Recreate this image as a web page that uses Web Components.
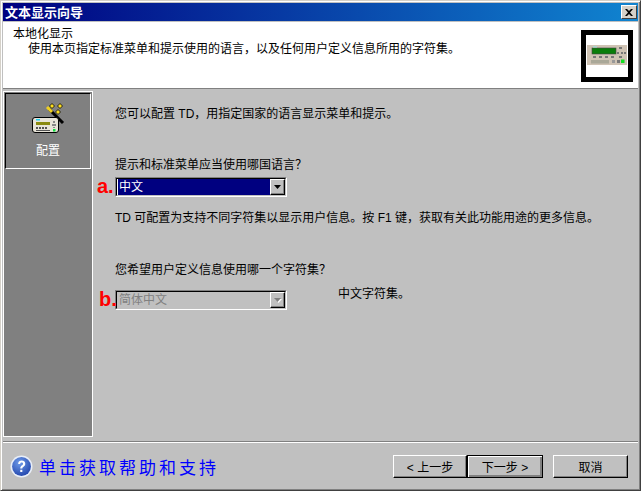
<!DOCTYPE html>
<html>
<head>
<meta charset="utf-8">
<style>
html, body { margin: 0; padding: 0; background: #c0c0c0; }
body { font: 12px "Liberation Sans", "Noto Sans CJK SC", sans-serif; color: #000; }
</style>
</head>
<body>
<wizard-window>
    <wizard-header slot="header" heading="本地化显示" text="使用本页指定标准菜单和提示使用的语言，以及任何用户定义信息所用的字符集。"></wizard-header>
    <wizard-sidebar slot="sidebar" label="配置"></wizard-sidebar>
    <wizard-text slot="content" top="16">您可以配置 TD，用指定国家的语言显示菜单和提示。</wizard-text>
    <wizard-text slot="content" top="37">提示和标准菜单应当使用哪国语言？</wizard-text>
    <wizard-combo slot="content" top="5" marker="a." marker-left="-18" value="中文" selected></wizard-combo>
    <wizard-text slot="content" top="14">TD 可配置为支持不同字符集以显示用户信息。按 F1 键，获取有关此功能用途的更多信息。</wizard-text>
    <wizard-text slot="content" top="38">您希望用户定义信息使用哪一个字符集？</wizard-text>
    <wizard-combo slot="content" top="13" marker="b." marker-left="-16" value="简体中文" disabled note="中文字符集。"></wizard-combo>
    <wizard-footer slot="footer"></wizard-footer>
</wizard-window>

<script>
const FONT = '"Liberation Sans", "Noto Sans CJK SC", sans-serif';

class WizardWindow extends HTMLElement {
    constructor() {
        super();
        this.attachShadow({ mode: 'open' });
    }
    connectedCallback() {
        this.shadowRoot.innerHTML = `
            <style>
                :host {
                    display: flex;
                    flex-direction: column;
                    box-sizing: border-box;
                    width: 641px;
                    height: 491px;
                    background: #c0c0c0;
                    border: 1px solid;
                    border-color: #d4d0c8 #404040 #404040 #d4d0c8;
                    box-shadow: inset 1px 1px 0 #fff, inset -1px -1px 0 #808080;
                    padding: 2px 2px 1px 2px;
                    font: 12px ${FONT};
                }
                .title {
                    flex: none;
                    display: flex;
                    align-items: center;
                    justify-content: space-between;
                    height: 18px;
                    padding: 0 1px 0 2px;
                    margin-bottom: 1px;
                    background: linear-gradient(90deg, #000080, #1084d0);
                    color: #fff;
                    font-size: 13px;
                    font-weight: bold;
                }
                .title span:first-child { margin-top: -1px; }
                .close {
                    display: flex;
                    align-items: center;
                    justify-content: center;
                    box-sizing: border-box;
                    width: 16px;
                    height: 14px;
                    background: #d4d0c8;
                    border: 1px solid;
                    border-color: #fff #404040 #404040 #fff;
                }
                .body {
                    flex: none;
                    display: flex;
                    height: 347px;
                    padding-top: 2px;
                }
                .content {
                    flex: 1;
                    padding-left: 22px;
                }
            </style>
            <div class="title">
                <span>文本显示向导</span>
                <span class="close">
                    <svg width="8" height="7" viewBox="0 0 8 7"><path d="M0 0h2l2 2 2-2h2L5 3.500 8 7H6L4 5 2 7H0l3-3.500z" fill="#000"/></svg>
                </span>
            </div>
            <slot name="header"></slot>
            <div class="body">
                <slot name="sidebar"></slot>
                <div class="content"><slot name="content"></slot></div>
            </div>
            <slot name="footer"></slot>
        `;
    }
}

class WizardHeader extends HTMLElement {
    constructor() {
        super();
        this.attachShadow({ mode: 'open' });
    }
    connectedCallback() {
        this.shadowRoot.innerHTML = `
            <style>
                :host {
                    display: flex;
                    flex: none;
                    box-sizing: border-box;
                    height: 67px;
                    background: #fff;
                    border-bottom: 1px solid #808080;
                    padding: 5px 5px 0 10px;
                    justify-content: space-between;
                }
                .h { line-height: 15px; }
                .t { line-height: 15px; padding-left: 15px; }
                .logo {
                    box-sizing: border-box;
                    width: 52px;
                    height: 52px;
                    border: 5px solid #000;
                    margin-top: 3px;
                    display: flex;
                    justify-content: center;
                    padding-top: 10px;
                }
                svg { filter: blur(.4px); }
            </style>
            <div>
                <div class="h">${this.getAttribute('heading')}</div>
                <div class="t">${this.getAttribute('text')}</div>
            </div>
            <div class="logo">
                <svg width="40" height="20" viewBox="0 0 40 20">
                    <rect width="40" height="20" fill="#cfc3b4"/>
                    <rect x="5" y="3" width="24" height="6" fill="#0a7d0a" stroke="#444" stroke-width=".6"/>
                    <rect x="6" y="1" width="4" height="1.500" fill="#a8d8d0"/>
                    <path d="M32 2h3v2h-3zM32 11h3v2h-3zM30 7h2v2h-2zM34 7h2v2h-2zM37 7h2v2h-2zM6 11h3v2H6zM12 11h3v2h-3zM18 11h3v2h-3zM24 11h3v2h-3z" fill="#777"/>
                    <rect x="4" y="15" width="18" height="3.500" fill="#aaa898"/>
                    <rect x="25" y="15" width="3" height="3" fill="#999"/>
                    <rect x="30" y="15" width="3" height="3" fill="#777"/>
                    <rect x="34" y="14.500" width="3.500" height="3.500" fill="#10e020"/>
                </svg>
            </div>
        `;
    }
}

class WizardSidebar extends HTMLElement {
    constructor() {
        super();
        this.attachShadow({ mode: 'open' });
    }
    connectedCallback() {
        this.shadowRoot.innerHTML = `
            <style>
                :host {
                    display: block;
                    flex: none;
                    box-sizing: border-box;
                    width: 90px;
                    height: 346px;
                    background: #808080;
                    border: 1px solid #fff;
                    padding: 1px;
                }
                .item {
                    box-sizing: border-box;
                    height: 76px;
                    border: 1px solid;
                    border-color: #000 #fff #fff #000;
                    display: flex;
                    flex-direction: column;
                    align-items: center;
                    color: #fff;
                    padding-top: 9px;
                }
                .item svg { overflow: visible; }
                .item span { line-height: 14px; margin-top: 9px; }
            </style>
            <div class="item">
                <svg width="34" height="32" viewBox="0 0 34 32">
                    <path d="M18 6l14 14" stroke="#000" stroke-width="3"/>
                    <path d="M16 4l5 5" stroke="#f0d020" stroke-width="3"/>
                    <path d="M18.500 3L21 .5 23.500 3 21 5.500zM26.500 3L29 .5 31.500 3 29 5.500zM24.500 9L27 6.500 29.500 9 27 11.500z" fill="#ffe020" stroke="#000" stroke-width=".8"/>
                    <rect x="1.500" y="14.500" width="26" height="15" rx="2.500" fill="#e8e4d8" stroke="#000"/>
                    <rect x="5" y="16" width="4" height="1.500" fill="#20d0f0"/>
                    <rect x="5" y="19" width="14" height="3" fill="#8a8a10"/>
                    <path d="M5 24h2v2H5zM8 24h2v2H8zM11 24h2v2h-2zM14 24h2v2h-2zM5 27h14v1H5z" fill="#555"/>
                    <path d="M22 18h2v2h-2zM21 21h4v2h-4zM22 24h2v1h-2z" fill="#888"/>
                    <rect x="22" y="26" width="2.500" height="2.500" fill="#10e040"/>
                </svg>
                <span>${this.getAttribute('label')}</span>
            </div>
        `;
    }
}

class WizardText extends HTMLElement {
    constructor() {
        super();
        this.attachShadow({ mode: 'open' });
    }
    connectedCallback() {
        this.shadowRoot.innerHTML = `
            <style>
                :host {
                    display: block;
                    line-height: 14px;
                    margin-top: ${this.getAttribute('top')}px;
                }
            </style>
            <slot></slot>
        `;
    }
}

class WizardCombo extends HTMLElement {
    constructor() {
        super();
        this.attachShadow({ mode: 'open' });
    }
    connectedCallback() {
        const disabled = this.hasAttribute('disabled');
        const note = this.getAttribute('note');
        this.shadowRoot.innerHTML = `
            <style>
                :host {
                    display: flex;
                    position: relative;
                    margin-top: ${this.getAttribute('top')}px;
                }
                .marker {
                    position: absolute;
                    left: ${this.getAttribute('marker-left')}px;
                    top: -3px;
                    color: #f00;
                    font: bold 20px/24px "Liberation Sans", sans-serif;
                }
                .box {
                    box-sizing: border-box;
                    width: 172px;
                    height: 20px;
                    border: 1px solid;
                    border-color: #808080 #fff #fff #808080;
                    display: flex;
                }
                .inner {
                    flex: 1;
                    display: flex;
                    box-sizing: border-box;
                    border: 1px solid;
                    border-color: #000 #c0c0c0 #c0c0c0 #000;
                    background: ${disabled ? '#c0c0c0' : '#fff'};
                    padding-left: 1px;
                }
                .value {
                    flex: 1;
                    line-height: 15px;
                    padding: 1px 0 0 1px;
                    background: ${disabled ? 'transparent' : '#000080'};
                    color: ${disabled ? '#808080' : '#fff'};
                }
                .arrow {
                    flex: none;
                    width: 15px;
                    box-sizing: border-box;
                    border: 1px solid;
                    border-color: #fff #000 #000 #fff;
                    box-shadow: inset -1px -1px 0 #808080;
                    background: #c0c0c0;
                    display: flex;
                    align-items: center;
                    justify-content: center;
                }
                .note { margin-left: 51px; line-height: 14px; margin-top: -3px; }
            </style>
            <span class="marker">${this.getAttribute('marker')}</span>
            <div class="box">
                <div class="inner">
                    <div class="value">${this.getAttribute('value')}</div>
                    <div class="arrow">
                        <svg width="8" height="5" viewBox="0 0 8 5">
                            ${disabled ? '<path d="M1 1h7L4.500 5z" fill="#fff"/>' : ''}
                            <path d="M0 0h7L3.500 4z" fill="${disabled ? '#808080' : '#000'}"/>
                        </svg>
                    </div>
                </div>
            </div>
            ${note ? `<div class="note">${note}</div>` : ''}
        `;
    }
}

class WizardButton extends HTMLElement {
    constructor() {
        super();
        this.attachShadow({ mode: 'open' });
    }
    connectedCallback() {
        const isDefault = this.hasAttribute('default');
        this.shadowRoot.innerHTML = `
            <style>
                :host {
                    display: flex;
                    align-items: center;
                    justify-content: center;
                    box-sizing: border-box;
                    width: ${this.getAttribute('width') || 75}px;
                    height: 23px;
                    background: #c0c0c0;
                    border: 1px solid;
                    border-color: ${isDefault ? '#000' : '#fff #000 #000 #fff'};
                    box-shadow: ${isDefault ? 'inset 1px 1px 0 #fff, inset -2px -2px 0 #808080' : 'inset -1px -1px 0 #808080'};
                }
            </style>
            <slot></slot>
        `;
    }
}

class WizardFooter extends HTMLElement {
    constructor() {
        super();
        this.attachShadow({ mode: 'open' });
    }
    connectedCallback() {
        this.shadowRoot.innerHTML = `
            <style>
                :host {
                    display: flex;
                    flex: 1;
                    align-items: flex-start;
                    border-top: 1px solid #808080;
                    box-shadow: inset 0 1px 0 #fff;
                    margin-top: 3px;
                    padding: 13px 10px 0 7px;
                }
                .help {
                    display: flex;
                    align-items: center;
                    gap: 6px;
                    color: #0000ff;
                    font-size: 17px;
                    letter-spacing: 3px;
                    flex: 1;
                    margin-top: -1px;
                }
                .next { margin-right: 10px; }
            </style>
            <div class="help">
                <svg width="23" height="23" viewBox="0 0 22 22">
                    <defs>
                        <radialGradient id="q" cx=".4" cy=".3" r=".8"><stop offset="0" stop-color="#6f9be8"/><stop offset="1" stop-color="#1c3fa8"/></radialGradient>
                    </defs>
                    <circle cx="11" cy="11" r="10.500" fill="#e8eef8"/>
                    <circle cx="11" cy="11" r="9" fill="url(#q)"/>
                    <path d="M7.800 8.500c0-4.200 6.800-4.200 6.800-.2 0 2.700-2.800 2.600-2.800 4.700h-2c0-3 2.700-3 2.700-4.600 0-1.600-2.700-1.500-2.800.1zM9.800 14h2v2.200h-2z" fill="#fff"/>
                </svg>
                <span>单击获取帮助和支持</span>
            </div>
            <wizard-button width="74">&lt; 上一步</wizard-button>
            <wizard-button default width="76" class="next">下一步 &gt;</wizard-button>
            <wizard-button>取消</wizard-button>
        `;
    }
}

customElements.define('wizard-window', WizardWindow);
customElements.define('wizard-header', WizardHeader);
customElements.define('wizard-sidebar', WizardSidebar);
customElements.define('wizard-text', WizardText);
customElements.define('wizard-combo', WizardCombo);
customElements.define('wizard-button', WizardButton);
customElements.define('wizard-footer', WizardFooter);
</script>
</body>
</html>
